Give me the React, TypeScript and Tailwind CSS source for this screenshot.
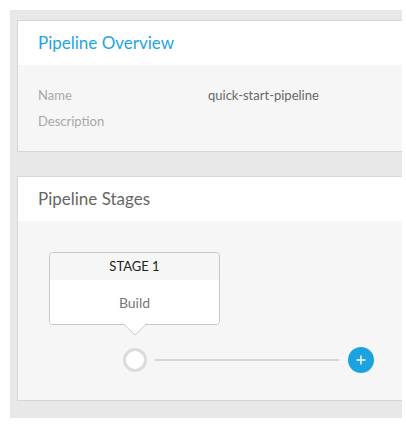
import React from 'react'

const font = { fontFamily: 'Lato, "Open Sans", sans-serif' }

function Field({ label, value }: { label: string; value?: string }) {
  return (
    <div className="flex h-[26px] items-center text-[13px]">
      <div className="w-[170px] text-[#a8a8a8]">{label}</div>
      <div className="text-[#666]">{value}</div>
    </div>
  )
}

export default function App() {
  return (
    <div className="h-[425px] w-[406px] bg-white pt-[10px] pl-[10px]" style={font}>
      <div className="w-[392px] overflow-hidden bg-[#e8e8e8] pt-[10px] pb-[17px] pl-[7px]">
        <div className="w-[400px] border border-[#d6d6d6]">
          <div className="flex h-[44px] items-center bg-white px-[20px] text-[17px] text-[#1ea4df]">
            Pipeline Overview
          </div>
          <div className="bg-[#f6f6f6] px-[20px] pt-[18px] pb-[16px]">
            <Field label="Name" value="quick-start-pipeline" />
            <Field label="Description" />
          </div>
        </div>

        <div className="mt-[24px] w-[400px] border border-[#d6d6d6]">
          <div className="flex h-[44px] items-center bg-white px-[20px] text-[17px] text-[#666]">
            Pipeline Stages
          </div>
          <div className="bg-[#f6f6f6] pl-[31px] pt-[31px] pb-[27px]">
            <div className="relative w-[171px]">
              <div className="overflow-hidden rounded-[4px] border border-[#c8c8c8]">
                <div className="flex h-[27px] items-center justify-center bg-[#f6f6f6] text-[13px] text-[#222]">
                  STAGE 1
                </div>
                <div className="flex h-[44px] items-center justify-center bg-white text-[14px] text-[#777]">
                  Build
                </div>
              </div>
              <svg className="absolute left-[74px] top-[71px]" width="24" height="13" viewBox="0 0 24 13">
                <path d="M0 0.5 L12 12 L24 0.5" fill="white" stroke="#c8c8c8" strokeWidth="1" />
                <path d="M1 0 L23 0" stroke="white" strokeWidth="2" />
              </svg>
            </div>
            <div className="mt-[22px] flex items-center pl-[74px]">
              <div className="h-[24px] w-[24px] rounded-full border-[3px] border-[#dcdcdc] bg-white" />
              <div className="ml-[8px] h-[2px] w-[184px] bg-[#d6d6d6]" />
              <div className="ml-[9px] flex h-[26px] w-[26px] items-center justify-center rounded-full bg-[#1ba3df]">
                <svg width="10" height="10" viewBox="0 0 10 10">
                  <path d="M5 0.5 V9.5 M0.5 5 H9.5" stroke="white" strokeWidth="1.4" />
                </svg>
              </div>
            </div>
          </div>
        </div>
      </div>
    </div>
  )
}
